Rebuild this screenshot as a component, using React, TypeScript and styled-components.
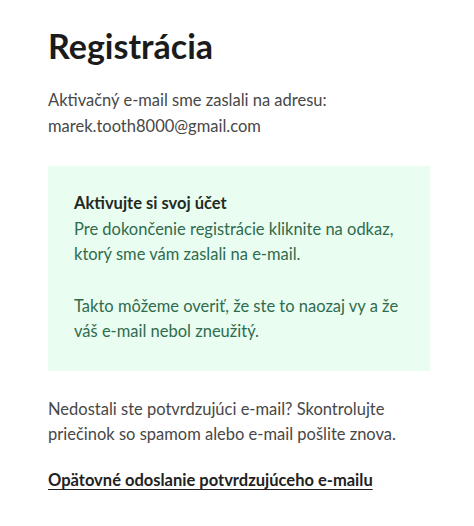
import styled, { createGlobalStyle } from 'styled-components';

const GlobalStyle = createGlobalStyle`
  html, body {
    margin: 0;
    padding: 0;
    background: #ffffff;
  }
  body {
    font-family: Lato, "Open Sans", sans-serif;
    -webkit-font-smoothing: antialiased;
  }
`;

const Page = styled.main`
  padding: 24px 44px 40px 48px;
`;

const Title = styled.h1`
  margin: 0 0 20px;
  font-size: 34px; // ~33px in the mock
  font-weight: 700;
  line-height: 44px;
  color: #1b1b1b;
`;

const Text = styled.p<{ $color?: string; $weight?: number }>`
  margin: 0;
  font-size: 16.5px;
  line-height: 25.5px;
  color: ${(p) => p.$color ?? '#474747'};
  font-weight: ${(p) => p.$weight ?? 400};
`;

const Notice = styled.section`
  margin: 27px 0 26px;
  padding: 25px 26px 26px;
  background: #eafdf1;
  display: flex;
  flex-direction: column;
  gap: 26px;
`;

const NoticeBlock = styled.div`
  display: flex;
  flex-direction: column;
`;

const ResendLink = styled.a`
  display: inline-block;
  margin-top: 20px;
  font-size: 16.5px;
  line-height: 25.5px;
  font-weight: 700;
  color: #222222;
  text-decoration: underline;
  text-underline-offset: 3px;
  cursor: pointer;
`;

export default function App() {
  return (
    <>
      <GlobalStyle />
      <Page>
        <Title>Registrácia</Title>
        <Text>
          Aktivačný e-mail sme zaslali na adresu:
          <br />
          marek.tooth8000@gmail.com
        </Text>

        <Notice>
          <NoticeBlock>
            <Text $color="#1f2a24" $weight={700}>
              Aktivujte si svoj účet
            </Text>
            <Text $color="#2f6b4e">
              Pre dokončenie registrácie kliknite na odkaz,
              <br />
              ktorý sme vám zaslali na e-mail.
            </Text>
          </NoticeBlock>
          <Text $color="#2f6b4e">
            Takto môžeme overiť, že ste to naozaj vy a že
            <br />
            váš e-mail nebol zneužitý.
          </Text>
        </Notice>

        <Text>
          Nedostali ste potvrdzujúci e-mail? Skontrolujte
          <br />
          priečinok so spamom alebo e-mail pošlite znova.
        </Text>
        <ResendLink href="#">Opätovné odoslanie potvrdzujúceho e-mailu</ResendLink>
      </Page>
    </>
  );
}
